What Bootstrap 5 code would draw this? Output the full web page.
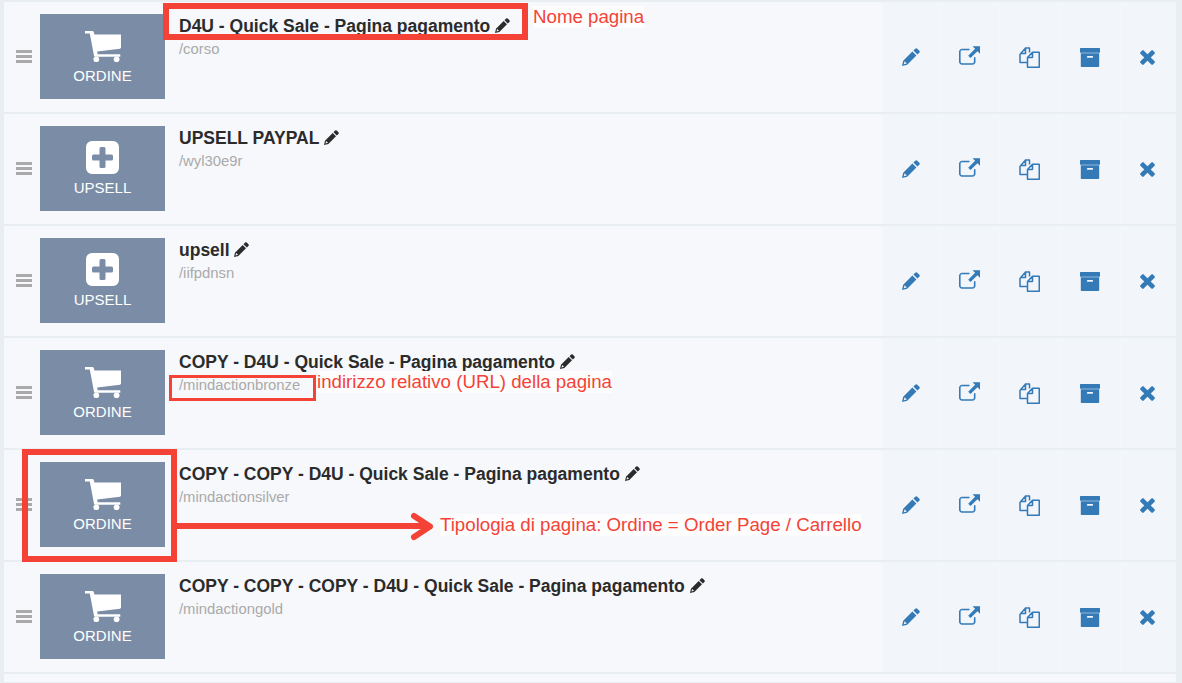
<!DOCTYPE html>
<html lang="it">
<head>
<meta charset="utf-8">
<title>Pagine</title>
<link href="https://cdn.jsdelivr.net/npm/bootstrap@5.3.0/dist/css/bootstrap.min.css" rel="stylesheet">
<style>
html,body{height:683px;overflow:hidden}
body{background:#e9eef3;font-family:"Liberation Sans",Arial,sans-serif;position:relative}
.pg-list{padding:2px 6px 0 4px;gap:2px}
.pg-row{height:110px;background:#f6f8fb}
.pg-end{height:8px}
.pg-handle{width:36px;padding-left:12px;flex:none;margin-top:-2px}
.pg-handle span{display:block;width:16px;height:3px;background:#aaa;margin:2px 0}
.pg-thumb{width:125px;height:85px;margin-top:12px;background:#7b8da6;color:#fff;font-size:15px;line-height:17px;flex:none;padding-top:1px}
.pg-thumb svg{display:block;margin-bottom:5px}
.pg-thumb.pg-up{padding-top:0;padding-bottom:1px}
.pg-main{padding:12px 0 0 14px;min-width:0}
.pg-title{font-size:17.5px;line-height:24px;font-weight:700;color:#2b2b2b}
.pg-title svg{vertical-align:-1px}
.pg-url{font-size:14.85px;line-height:22px;color:#aaa}
.pg-actions{width:294px;flex:none;background:#f2f5fa}
.pg-cell{flex:none;height:100%;padding-right:1px;box-shadow:inset 1px 0 0 #f4f7fb}
.pg-cell svg{color:#337ab7;display:block}
.pg-cell:nth-child(1){width:58px}
.pg-cell:nth-child(2){width:59px}
.pg-cell:nth-child(2) svg{margin-top:-3px}
.pg-cell:nth-child(3){width:61px}
.pg-cell:nth-child(4){width:60px}
.pg-cell:nth-child(5){width:56px}
.mk{position:absolute;border-style:solid;border-color:#f44336}
.mk-a{left:163px;top:3px;width:365px;height:37px;border-width:6px}
.mk-b{left:169px;top:375px;width:147px;height:26px;border-width:3px}
.mk-c{left:22px;top:449px;width:155px;height:113px;border-width:6px}
.nt{position:absolute;color:#f44336;font-size:18.7px;line-height:22px;white-space:nowrap;background:#fdfdfe}
.nt-a{left:533px;top:6px}
.nt-b{left:317px;top:371px}
.nt-c{left:440px;top:514px}
.ar{position:absolute;left:176px;top:510px}
</style>
</head>
<body>
<svg width="0" height="0" class="position-absolute">
<defs>
<symbol id="i-cart" viewBox="0 0 36 31"><path fill="#fff" d="M0 0h7.200c.9 0 1.500.6 1.700 1.400l.5 2.100H36v13.200l-.9 1-23 2.900.6 2.600h22.600v2.600H10.400c-.7 0-1.200-.5-1.400-1.100L4.800 2.600H0z"/><circle cx="11.300" cy="28.300" r="2.900" fill="#fff"/><circle cx="31.600" cy="28.300" r="2.900" fill="#fff"/></symbol>
<symbol id="i-plus" viewBox="0 0 33 33"><path fill="#fff" fill-rule="evenodd" d="M6 0h21a6 6 0 0 1 6 6v21a6 6 0 0 1-6 6H6a6 6 0 0 1-6-6V6a6 6 0 0 1 6-6zM15 6a1.500 1.500 0 0 0-1.500 1.500v6h-6A1.500 1.500 0 0 0 6 15v3a1.500 1.500 0 0 0 1.500 1.500h6v6A1.500 1.500 0 0 0 15 27h3a1.500 1.500 0 0 0 1.500-1.500v-6h6A1.500 1.500 0 0 0 27 18v-3a1.500 1.500 0 0 0-1.500-1.500h-6v-6A1.500 1.500 0 0 0 18 6z"/></symbol>
<symbol id="i-pen" viewBox="0 0 18 18"><path fill="currentColor" d="M13.300.7a1.400 1.400 0 0 1 2 0l2 2a1.400 1.400 0 0 1 0 2l-1.900 1.900-4-4zM10.400 3.600l4 4L5.200 16.800 0 18l1.200-5.200zM2.600 13.200l-.8 3 3-.8z"/></symbol>
<symbol id="i-ext" viewBox="0 0 21 18.500"><path fill="none" stroke="currentColor" stroke-width="1.600" d="M10.500 3.300H3A2.200 2.200 0 0 0 .8 5.500v10A2.200 2.200 0 0 0 3 17.700h10.500a2.200 2.200 0 0 0 2.200-2.200v-4.500"/><path fill="currentColor" d="M13.500 0H21v7.500l-2.600-2.600-6.900 6.900-2.300-2.300 6.900-6.900z"/></symbol>
<symbol id="i-copy" viewBox="0 0 21 21"><path fill="none" stroke="currentColor" stroke-width="1.500" stroke-linejoin="round" d="M8.500 15.500H1V7.500L6.500 1h4v4.500M6.500 1v5.500H1"/><path fill="none" stroke="currentColor" stroke-width="1.500" stroke-linejoin="round" d="M8.500 20.250V10.500L13.500 5.250h6.750v15zM13.500 5.250V10.500H8.500"/></symbol>
<symbol id="i-box" viewBox="0 0 20 19"><path fill="currentColor" fill-rule="evenodd" d="M.5 0h19a.5.5 0 0 1 .5.5v3.700a.5.5 0 0 1-.5.5H.5a.5.5 0 0 1-.5-.5V.5A.5.500 0 0 1 .5 0zM.8 5.300h18.400V18a1 1 0 0 1-1 1H1.800a1 1 0 0 1-1-1zM7.500 8a.5.5 0 0 0-.5.5v.8a.5.5 0 0 0 .5.5h5a.5.5 0 0 0 .5-.5v-.8a.5.5 0 0 0-.5-.5z"/></symbol>
<symbol id="i-x" viewBox="0 0 14 14"><path fill="currentColor" d="M3.400.4 7 4 10.600.4a1 1 0 0 1 1.400 0L13.600 2a1 1 0 0 1 0 1.400L10 7l3.600 3.600a1 1 0 0 1 0 1.400L12 13.600a1 1 0 0 1-1.400 0L7 10l-3.600 3.600a1 1 0 0 1-1.400 0L.4 12a1 1 0 0 1 0-1.400L4 7 .4 3.400a1 1 0 0 1 0-1.400L2 .4a1 1 0 0 1 1.400 0z"/></symbol>
</defs>
</svg>

<div class="pg-list d-flex flex-column">

<div class="pg-row d-flex align-items-center">
<div class="pg-handle"><span></span><span></span><span></span></div>
<div class="pg-thumb d-flex flex-column align-items-center justify-content-center align-self-start"><svg width="36" height="31"><use href="#i-cart"/></svg>ORDINE</div>
<div class="pg-main flex-grow-1 align-self-start"><div class="pg-title">D4U - Quick Sale - Pagina pagamento <svg width="15" height="15"><use href="#i-pen"/></svg></div><div class="pg-url">/corso</div></div>
<div class="pg-actions d-flex align-self-stretch">
<div class="pg-cell d-flex align-items-center justify-content-center"><svg width="18" height="18"><use href="#i-pen"/></svg></div>
<div class="pg-cell d-flex align-items-center justify-content-center"><svg width="21" height="19"><use href="#i-ext"/></svg></div>
<div class="pg-cell d-flex align-items-center justify-content-center"><svg width="21" height="21"><use href="#i-copy"/></svg></div>
<div class="pg-cell d-flex align-items-center justify-content-center"><svg width="20" height="19"><use href="#i-box"/></svg></div>
<div class="pg-cell d-flex align-items-center justify-content-center"><svg width="15" height="15"><use href="#i-x"/></svg></div>
</div>
</div>

<div class="pg-row d-flex align-items-center">
<div class="pg-handle"><span></span><span></span><span></span></div>
<div class="pg-thumb pg-up d-flex flex-column align-items-center justify-content-center align-self-start"><svg width="33" height="33"><use href="#i-plus"/></svg>UPSELL</div>
<div class="pg-main flex-grow-1 align-self-start"><div class="pg-title">UPSELL PAYPAL <svg width="15" height="15"><use href="#i-pen"/></svg></div><div class="pg-url">/wyl30e9r</div></div>
<div class="pg-actions d-flex align-self-stretch">
<div class="pg-cell d-flex align-items-center justify-content-center"><svg width="18" height="18"><use href="#i-pen"/></svg></div>
<div class="pg-cell d-flex align-items-center justify-content-center"><svg width="21" height="19"><use href="#i-ext"/></svg></div>
<div class="pg-cell d-flex align-items-center justify-content-center"><svg width="21" height="21"><use href="#i-copy"/></svg></div>
<div class="pg-cell d-flex align-items-center justify-content-center"><svg width="20" height="19"><use href="#i-box"/></svg></div>
<div class="pg-cell d-flex align-items-center justify-content-center"><svg width="15" height="15"><use href="#i-x"/></svg></div>
</div>
</div>

<div class="pg-row d-flex align-items-center">
<div class="pg-handle"><span></span><span></span><span></span></div>
<div class="pg-thumb pg-up d-flex flex-column align-items-center justify-content-center align-self-start"><svg width="33" height="33"><use href="#i-plus"/></svg>UPSELL</div>
<div class="pg-main flex-grow-1 align-self-start"><div class="pg-title">upsell <svg width="15" height="15"><use href="#i-pen"/></svg></div><div class="pg-url">/iifpdnsn</div></div>
<div class="pg-actions d-flex align-self-stretch">
<div class="pg-cell d-flex align-items-center justify-content-center"><svg width="18" height="18"><use href="#i-pen"/></svg></div>
<div class="pg-cell d-flex align-items-center justify-content-center"><svg width="21" height="19"><use href="#i-ext"/></svg></div>
<div class="pg-cell d-flex align-items-center justify-content-center"><svg width="21" height="21"><use href="#i-copy"/></svg></div>
<div class="pg-cell d-flex align-items-center justify-content-center"><svg width="20" height="19"><use href="#i-box"/></svg></div>
<div class="pg-cell d-flex align-items-center justify-content-center"><svg width="15" height="15"><use href="#i-x"/></svg></div>
</div>
</div>

<div class="pg-row d-flex align-items-center">
<div class="pg-handle"><span></span><span></span><span></span></div>
<div class="pg-thumb d-flex flex-column align-items-center justify-content-center align-self-start"><svg width="36" height="31"><use href="#i-cart"/></svg>ORDINE</div>
<div class="pg-main flex-grow-1 align-self-start"><div class="pg-title">COPY - D4U - Quick Sale - Pagina pagamento <svg width="15" height="15"><use href="#i-pen"/></svg></div><div class="pg-url">/mindactionbronze</div></div>
<div class="pg-actions d-flex align-self-stretch">
<div class="pg-cell d-flex align-items-center justify-content-center"><svg width="18" height="18"><use href="#i-pen"/></svg></div>
<div class="pg-cell d-flex align-items-center justify-content-center"><svg width="21" height="19"><use href="#i-ext"/></svg></div>
<div class="pg-cell d-flex align-items-center justify-content-center"><svg width="21" height="21"><use href="#i-copy"/></svg></div>
<div class="pg-cell d-flex align-items-center justify-content-center"><svg width="20" height="19"><use href="#i-box"/></svg></div>
<div class="pg-cell d-flex align-items-center justify-content-center"><svg width="15" height="15"><use href="#i-x"/></svg></div>
</div>
</div>

<div class="pg-row d-flex align-items-center">
<div class="pg-handle"><span></span><span></span><span></span></div>
<div class="pg-thumb d-flex flex-column align-items-center justify-content-center align-self-start"><svg width="36" height="31"><use href="#i-cart"/></svg>ORDINE</div>
<div class="pg-main flex-grow-1 align-self-start"><div class="pg-title">COPY - COPY - D4U - Quick Sale - Pagina pagamento <svg width="15" height="15"><use href="#i-pen"/></svg></div><div class="pg-url">/mindactionsilver</div></div>
<div class="pg-actions d-flex align-self-stretch">
<div class="pg-cell d-flex align-items-center justify-content-center"><svg width="18" height="18"><use href="#i-pen"/></svg></div>
<div class="pg-cell d-flex align-items-center justify-content-center"><svg width="21" height="19"><use href="#i-ext"/></svg></div>
<div class="pg-cell d-flex align-items-center justify-content-center"><svg width="21" height="21"><use href="#i-copy"/></svg></div>
<div class="pg-cell d-flex align-items-center justify-content-center"><svg width="20" height="19"><use href="#i-box"/></svg></div>
<div class="pg-cell d-flex align-items-center justify-content-center"><svg width="15" height="15"><use href="#i-x"/></svg></div>
</div>
</div>

<div class="pg-row d-flex align-items-center">
<div class="pg-handle"><span></span><span></span><span></span></div>
<div class="pg-thumb d-flex flex-column align-items-center justify-content-center align-self-start"><svg width="36" height="31"><use href="#i-cart"/></svg>ORDINE</div>
<div class="pg-main flex-grow-1 align-self-start"><div class="pg-title">COPY - COPY - COPY - D4U - Quick Sale - Pagina pagamento <svg width="15" height="15"><use href="#i-pen"/></svg></div><div class="pg-url">/mindactiongold</div></div>
<div class="pg-actions d-flex align-self-stretch">
<div class="pg-cell d-flex align-items-center justify-content-center"><svg width="18" height="18"><use href="#i-pen"/></svg></div>
<div class="pg-cell d-flex align-items-center justify-content-center"><svg width="21" height="19"><use href="#i-ext"/></svg></div>
<div class="pg-cell d-flex align-items-center justify-content-center"><svg width="21" height="21"><use href="#i-copy"/></svg></div>
<div class="pg-cell d-flex align-items-center justify-content-center"><svg width="20" height="19"><use href="#i-box"/></svg></div>
<div class="pg-cell d-flex align-items-center justify-content-center"><svg width="15" height="15"><use href="#i-x"/></svg></div>
</div>
</div>

<div class="pg-row pg-end"></div>
</div>

<div class="mk mk-a"></div>
<div class="mk mk-b"></div>
<div class="mk mk-c"></div>
<div class="nt nt-a">Nome pagina</div>
<div class="nt nt-b">indirizzo relativo (URL) della pagina</div>
<div class="nt nt-c">Tipologia di pagina: Ordine = Order Page / Carrello</div>
<svg class="ar" width="258" height="32" viewBox="0 0 258 32"><path d="M0 16H253" stroke="#f44336" stroke-width="6" fill="none"/><path d="M238 6l16 10.500L238 27" stroke="#f44336" stroke-width="6" stroke-linecap="round" stroke-linejoin="round" fill="none"/></svg>
<script src="https://cdn.jsdelivr.net/npm/bootstrap@5.3.0/dist/js/bootstrap.bundle.min.js"></script>
</body>
</html>
